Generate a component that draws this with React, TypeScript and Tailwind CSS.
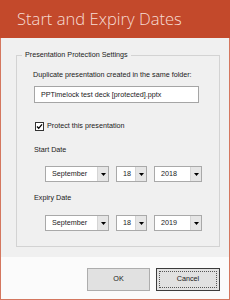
import React from "react";

const ui = { fontFamily: '"Liberation Sans", Arial, sans-serif' };

function Arrow() {
  return (
    <div className="flex h-full w-[11px] items-center justify-center border-l border-[#d5d5d5] bg-[#e6e6e6]">
      <svg width="5" height="3" viewBox="0 0 5 3">
        <path d="M0 0h5L2.5 3z" fill="#000" />
      </svg>
    </div>
  );
}

function Combo({ value, w }: { value: string; w: string }) {
  return (
    <div className={`flex h-[16px] ${w} items-stretch border border-[#a9a9a9] bg-white`}>
      <div className="flex flex-1 items-center pl-[6px] text-[7.2px] leading-none text-[#1a1a1a]">{value}</div>
      <Arrow />
    </div>
  );
}

function DateRow({ month, day, year }: { month: string; day: string; year: string }) {
  return (
    <div className="flex gap-[7px] pl-[28px]">
      <Combo value={month} w="w-[64px]" />
      <Combo value={day} w="w-[31px]" />
      <Combo value={year} w="w-[48px]" />
    </div>
  );
}

export default function App() {
  return (
    <div className="flex h-[300px] w-[230px] flex-col border-x border-b border-[#d4775f] bg-[#f0f0f0]" style={ui}>
      <div className="-mx-px flex h-[38px] items-center bg-[#c3492b] pl-[17px]">
        <span className="text-[16.6px] font-light leading-none text-[#f6dcd4]" style={{ fontFamily: '"Open Sans", sans-serif' }}>
          Start and Expiry Dates
        </span>
      </div>
      <div className="h-[219px] pt-[17px] pl-[15px]">
        <div className="relative h-[192px] w-[204px] border border-[#d3d3d3]">
          <span className="absolute -top-[6px] left-[5px] bg-[#f0f0f0] px-[3px] text-[7.2px] leading-[10px] text-[#1a1a1a]">
            Presentation Protection Settings
          </span>
          <div className="pl-[16px] pt-[14px] text-[7.2px] leading-[10px] text-[#1a1a1a]">
            <div>Duplicate presentation created in the same folder:</div>
            <div className="ml-px mt-[6px] flex h-[17px] w-[165px] items-center border border-[#a5a5a5] bg-white pl-[6px]">
              PPTimelock test deck [protected].pptx
            </div>
            <div className="mt-[18px] flex items-center gap-[3px] pl-[2px]">
              <div className="flex h-[9px] w-[9px] items-center justify-center border border-[#333] bg-white">
                <svg width="7" height="7" viewBox="0 0 7 7">
                  <path d="M1 3.5l1.7 1.8L6 1.3" fill="none" stroke="#000" strokeWidth="1.3" />
                </svg>
              </div>
              <span>Protect this presentation</span>
            </div>
            <div className="mt-[14px] pl-px">Start Date</div>
          </div>
          <div className="mt-[11px]">
            <DateRow month="September" day="18" year="2018" />
          </div>
          <div className="mt-[11px] pl-[17px] text-[7.2px] leading-[10px] text-[#1a1a1a]">Expiry Date</div>
          <div className="mt-[12px]">
            <DateRow month="September" day="18" year="2019" />
          </div>
        </div>
      </div>
      <div className="flex flex-1 items-start justify-end gap-[6px] bg-[#fbfbfb] pr-[9px] pt-[11px] text-[7.2px] text-[#1a1a1a]">
        <button className="flex h-[23px] w-[63px] items-center justify-center border border-[#adadad] bg-[#e1e1e1]">OK</button>
        <button className="flex h-[23px] w-[64px] items-center justify-center border border-[#3c3c3c] bg-[#e1e1e1] p-[2px]">
          <span className="flex h-full w-full items-center justify-center border border-dotted border-[#555]">Cancel</span>
        </button>
      </div>
    </div>
  );
}
